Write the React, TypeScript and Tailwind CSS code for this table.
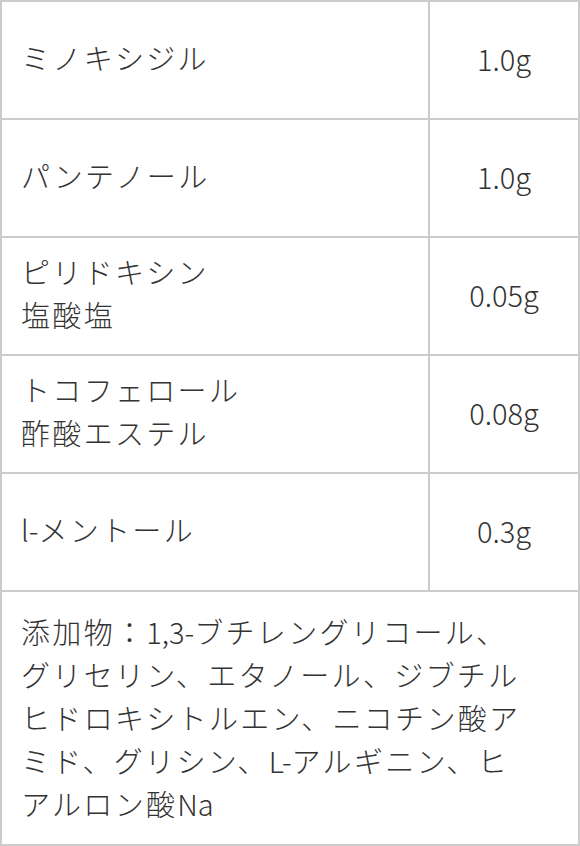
const rows = [
  { name: [<>ミノキシジル</>], amount: '1.0g' },
  { name: [<>パンテノール</>], amount: '1.0g' },
  { name: [<>ピリドキシン</>, <>塩酸塩</>], amount: '0.05g' },
  { name: [<>トコフェロール</>, <>酢酸エステル</>], amount: '0.08g' },
  { name: [<><span className="tracking-normal">l-</span>メントール</>], amount: '0.3g' },
]

export default function App() {
  return (
    <div className="w-[580px] bg-white font-['Noto_Sans_CJK_JP',sans-serif] text-[29px] font-light leading-[43px] tracking-[0.08em] text-[#333]">
      <div className="border-2 border-[#ccc]">
        {rows.map((row, i) => (
          <div key={i} className="flex h-[118px] border-b-2 border-[#ccc]">
            <div className="flex w-[428px] flex-col justify-center border-r-2 border-[#ccc] pl-[19px] pr-[20px] pb-[6px]">
              {row.name.map((line, j) => (
                <p key={j}>{line}</p>
              ))}
            </div>
            <div className="flex flex-1 items-center justify-center pb-[4px] tracking-normal">
              <p>{row.amount}</p>
            </div>
          </div>
        ))}
        <p className="pl-[19px] pr-[47px] pt-[18px] pb-[19px]">
          添加物：<span className="tracking-normal">1,3-</span>ブチレングリコール、グリセリン、エタノール、ジブチルヒドロキシトルエン、ニコチン酸アミド、グリシン、<span className="tracking-normal">L-</span>アルギニン、ヒアルロン酸<span className="tracking-normal">Na</span>
        </p>
      </div>
    </div>
  )
}
